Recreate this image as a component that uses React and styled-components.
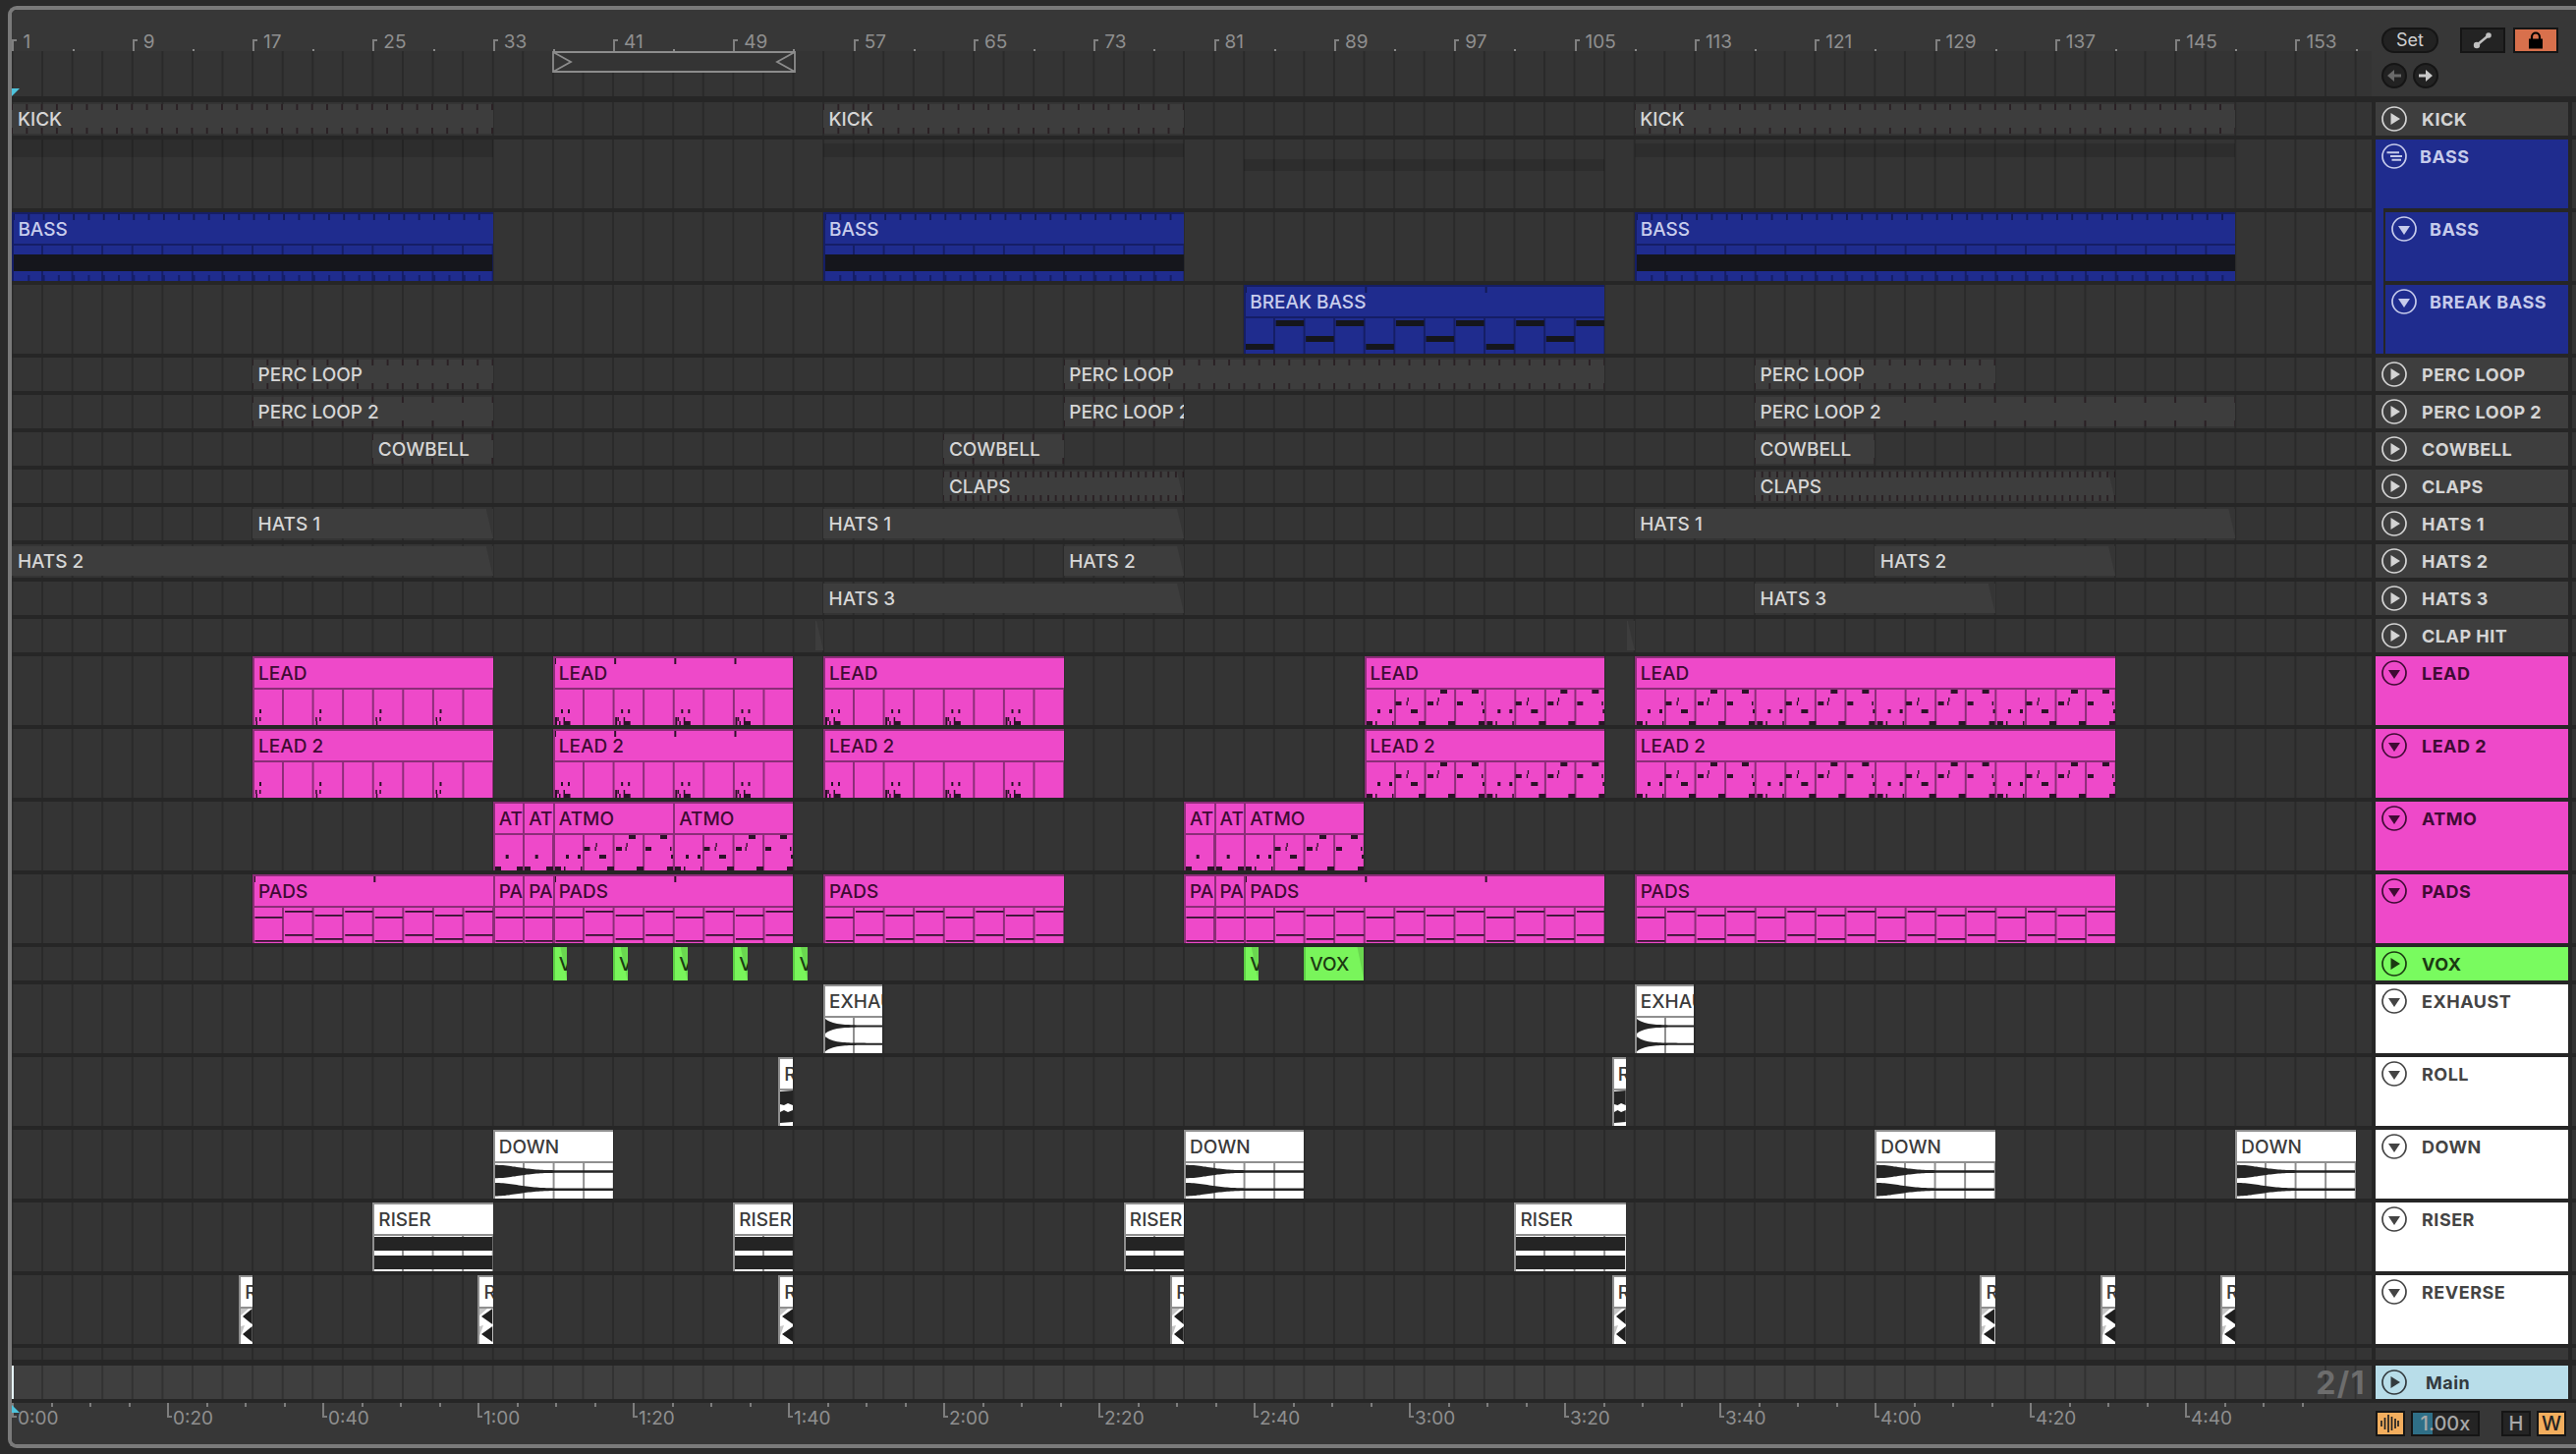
import React from 'react';
import styled, { createGlobalStyle } from 'styled-components';

const BAR = 15.29;
const CELL = BAR * 2;
const barX = (b) => 0.4 + (b - 1) * BAR;
const LANE_W = 2402;

const TONES = {
  gray: { bg: '#3d3d3d', edge: '#3d3d3d', ink: '#d6d6d6', line: '#2d2327', mark: '#2a2024', note: '#222' },
  blue: { bg: '#1f2c8e', edge: '#151e66', ink: '#c8cdec', line: '#151e66', mark: '#131a55', note: '#15161c' },
  pink: { bg: '#ee49c9', edge: '#8c2d78', ink: '#3f0b34', line: '#8c2d78', mark: '#2c1228', note: '#2c1228' },
  green: { bg: '#79f55b', edge: '#5ccf45', ink: '#1c3a12', line: '#5ccf45', mark: '#1c3a12', note: '#1c3a12' },
  white: { bg: '#ffffff', edge: '#8f8f8f', ink: '#3b3b3b', line: '#8f8f8f', mark: '#222', note: '#242424' },
};

const GlobalStyle = createGlobalStyle`
  html, body { margin: 0; padding: 0; background: #2b2b2b; }
  body { width: 2622px; height: 1480px; overflow: hidden; font-family: Inter, "Liberation Sans", sans-serif; }
`;

const Page = styled.div`
  width: 2622px;
  height: 1480px;
  padding: 6px 0 6px 8px;
  box-sizing: border-box;
  background: #2b2b2b;
`;
const Frame = styled.div`
  height: 1468px;
  box-sizing: border-box;
  border: 4px solid #7a7a7a;
  border-right: none;
  border-radius: 9px 0 0 9px;
  overflow: hidden;
  background: #262626;
  display: flex;
  flex-direction: column;
`;
const TopBar = styled.div`
  display: flex;
  height: 88px;
  flex: none;
  background: #373737;
`;
const TopLeft = styled.div`
  width: ${LANE_W}px;
  flex: none;
  display: flex;
  flex-direction: column;
`;
const Ruler = styled.div`
  position: relative;
  height: 42px;
  flex: none;
`;
const BarLabel = styled.div`
  position: absolute;
  top: 30px;
  height: 12px;
  border-left: 2px solid #808080;
  color: #8f8f8f;
  font-size: 19px;
  line-height: 1;
  &::before {
    content: '';
    position: absolute;
    left: 0;
    top: 0;
    width: 3px;
    height: 2px;
    background: #808080;
  }
  & > span { position: absolute; left: 9px; top: -7px; }
`;
const HalfTick = styled.div`
  position: absolute;
  top: 40px;
  width: 2px;
  height: 2px;
  background: #8a8a8a;
`;
const Overview = styled.div`
  position: relative;
  flex: 1;
  background-color: #343434;
  background-image: linear-gradient(90deg, #2a2a2a 2px, transparent 2px);
  background-size: ${CELL}px 100%;
  background-position: -0.5px 0;
`;
const LoopBrace = styled.svg`
  position: absolute;
  left: 550px;
  top: 0;
`;
const Playhead = styled.svg`
  position: absolute;
  left: 0;
  top: ${(p) => p.$top}px;
`;
const SetPanel = styled.div`
  flex: 1;
  box-sizing: border-box;
  padding: 18px 0 0 10px;
  display: flex;
  flex-direction: column;
  gap: 10px;
`;
const PanelRow = styled.div`
  display: flex;
  align-items: flex-start;
  gap: ${(p) => p.$gap || 6}px;
`;
const SetPill = styled.div`
  width: 58px;
  height: 26px;
  box-sizing: border-box;
  border: 2px solid #151515;
  border-radius: 13px;
  background: #222;
  color: #cfcfcf;
  font-size: 18px;
  line-height: 22px;
  text-align: center;
  margin-right: 14px;
`;
const RoundBtn = styled.div`
  width: 26px;
  height: 26px;
  box-sizing: border-box;
  border: 2px solid #151515;
  border-radius: 50%;
  background: #222;
  display: flex;
  align-items: center;
  justify-content: center;
`;
const SquareBtn = styled.div`
  width: 46px;
  height: 26px;
  box-sizing: border-box;
  border: 2px solid #151515;
  background: ${(p) => p.$bg || '#232323'};
  display: flex;
  align-items: center;
  justify-content: center;
`;
const Rows = styled.div`
  display: flex;
  flex-direction: column;
  gap: 4px;
  padding-top: 6px;
  flex: none;
`;
const Row = styled.div`
  display: flex;
  gap: 4px;
  height: ${(p) => p.$h}px;
  margin-top: ${(p) => p.$mt || 0}px;
`;
const Lane = styled.div`
  position: relative;
  width: ${LANE_W}px;
  flex: none;
  overflow: hidden;
  background-color: ${(p) => (p.$light ? '#3f3f3f' : '#343434')};
  background-image: linear-gradient(90deg, ${(p) => (p.$light ? '#323232' : '#2a2a2a')} 2px, transparent 2px);
  background-size: ${CELL}px 100%;
  background-position: -0.5px 0;
`;
const Tail = styled.div`
  flex: 1;
  background: #343434;
`;
const HeadSlot = styled.div`
  position: relative;
  width: 196px;
  flex: none;
  display: flex;
  background: ${(p) => (p.$nested ? TONES.blue.bg : 'transparent')};
  &::before {
    content: ${(p) => (p.$nested ? "''" : 'none')};
    position: absolute;
    left: 0;
    top: -4px;
    width: 8px;
    height: 4px;
    background: ${TONES.blue.bg};
  }
`;
const Head = styled.div`
  flex: 1;
  margin-left: ${(p) => (p.$nested ? 8 : 0)}px;
  border-left: ${(p) => (p.$nested ? '2px solid #262626' : 'none')};
  background: ${(p) => p.$bg};
  color: ${(p) => p.$ink};
  position: relative;
  &::before {
    content: ${(p) => (p.$nested ? "''" : 'none')};
    position: absolute;
    left: -2px;
    top: -4px;
    width: 2px;
    height: 4px;
    background: #262626;
  }
`;
const HeadLine = styled.div`
  height: 34px;
  box-sizing: border-box;
  padding-left: 6px;
  display: flex;
  align-items: center;
  gap: ${(p) => p.$gap}px;
  font-size: 18px;
  font-weight: 700;
  letter-spacing: 0.5px;
`;
const ClipBox = styled.div`
  position: absolute;
  top: ${(p) => (p.$short && p.$tone === 'gray' ? 2 : 0)}px;
  height: ${(p) => (p.$short ? (p.$tone === 'gray' ? 30 : 34) : 70)}px;
  box-sizing: border-box;
  overflow: hidden;
  background: ${(p) => TONES[p.$tone].bg};
  border-left: ${(p) => (p.$tone === 'gray' ? 'none' : `2px solid ${TONES[p.$tone].edge}`)};
  border-top: ${(p) => (p.$tone === 'gray' || p.$tone === 'green' ? 'none' : `2px solid ${TONES[p.$tone].edge}`)};
  color: ${(p) => TONES[p.$tone].ink};
  &::after {
    content: ${(p) => (p.$fade ? "''" : 'none')};
    position: absolute;
    right: 0;
    top: 0;
    bottom: 0;
    width: 7px;
    background: rgba(0, 0, 0, 0.12);
    clip-path: polygon(0 0, 100% 0, 100% 100%);
  }
`;
const ClipTitle = styled.div`
  height: ${(p) => (p.$short ? '100%' : '30px')};
  padding-left: ${(p) => (p.$tone === 'gray' ? 5.5 : 4)}px;
  display: flex;
  align-items: center;
  white-space: nowrap;
  font-size: 19px;
  font-weight: 500;
`;
const ClipBody = styled.div`
  position: relative;
  height: 36px;
  border-top: 2px solid ${(p) => TONES[p.$tone].line};
  background-color: ${(p) => TONES[p.$tone].bg};
  background-image: linear-gradient(90deg, ${(p) => TONES[p.$tone].line} 2px, transparent 2px);
  background-size: ${CELL}px 100%;
  background-position: 28px 0;
`;
const Art = styled.svg`
  position: absolute;
  left: 0;
  top: 0;
  display: block;
`;
const MarkStrip = styled.div`
  position: absolute;
  left: 0;
  right: 0;
  ${(p) => (p.$bottom ? 'bottom: 0;' : 'top: 0;')}
  height: ${(p) => p.$h}px;
  background-image: linear-gradient(90deg, transparent calc(100% - 2px), ${(p) => p.$c} calc(100% - 2px));
  background-size: ${(p) => p.$period}px 100%;
  background-position: 1px 0;
`;
const Band = styled.div`
  position: absolute;
  top: ${(p) => p.$top}px;
  height: ${(p) => p.$h}px;
  background: rgba(0, 0, 0, 0.12);
`;
const TimeSig = styled.div`
  position: absolute;
  right: 6px;
  top: 0;
  bottom: 0;
  display: flex;
  align-items: center;
  color: #6d6d6d;
  font-size: 32px;
  font-weight: 700;
  letter-spacing: 1.5px;
`;
const NowLine = styled.div`
  position: absolute;
  left: 0;
  top: 0;
  bottom: 0;
  width: 2px;
  background: #e6f6fb;
`;
const Filler = styled(Tail)`
  background: #383838;
`;
const FooterBar = styled.div`
  display: flex;
  height: 42px;
  margin-top: 4px;
  flex: none;
  background: #373737;
`;
const TimeRuler = styled.div`
  position: relative;
  width: ${LANE_W}px;
  flex: none;
`;
const TimeMajor = styled.div`
  position: absolute;
  top: 0;
  height: 15px;
  border-left: 2px solid #7d7d7d;
  color: #8f8f8f;
  font-size: 19px;
  line-height: 1;
  &::after {
    content: '';
    position: absolute;
    left: 0;
    bottom: 0;
    width: 3px;
    height: 2px;
    background: #7d7d7d;
  }
  & > span { position: absolute; left: 4px; top: 6px; }
`;
const TimeMinor = styled.div`
  position: absolute;
  top: 0;
  width: 2px;
  height: 4px;
  background: #7d7d7d;
`;
const FootControls = styled.div`
  flex: 1;
  box-sizing: border-box;
  padding: 8px 0 0 4px;
  display: flex;
  align-items: flex-start;
`;
const Chip = styled.div`
  width: ${(p) => p.$w}px;
  height: 26px;
  box-sizing: border-box;
  margin-left: ${(p) => p.$ml || 0}px;
  border: 2px solid #151515;
  background: ${(p) => p.$bg};
  color: ${(p) => p.$ink || '#a8a8a8'};
  display: flex;
  align-items: center;
  justify-content: center;
  font-size: 20px;
  font-weight: 500;
`;
const SpeedChip = styled(Chip)`
  position: relative;
  overflow: hidden;
  & > span { position: relative; }
  &::before {
    content: '';
    position: absolute;
    left: 0;
    top: 0;
    bottom: 0;
    width: 20px;
    background: #2f6f87;
  }
`;

/* ---------- clip artwork ---------- */
const NOTES = {
  A: { period: 61.16, list: [[1, 28, 1.5, 4], [1.5, 32, 1.5, 4], [5, 20, 2, 4], [5, 28, 1.5, 4]] },
  B: { period: 61.16, list: [[0, 28, 2, 8], [2.3, 28, 1.5, 4], [4, 32, 1.5, 4], [6, 20, 2, 4], [8.5, 28, 1.5, 4], [8.5, 32, 7, 4], [13, 20, 2, 4]] },
  C: {
    period: CELL * 4,
    list: [
      [0, 32, 6, 4], [9, 32, 1.5, 4], [26, 32, 1.5, 4], [11, 20, 3, 4], [23, 20, 3, 4],
      [29.5, 12, 6, 4], [41.5, 8, 1.3, 4], [40.5, 12, 1.3, 4], [45, 20, 7, 4], [53, 32, 7, 4],
      [62, 12, 6, 4], [72.5, 8, 1.3, 4], [71.5, 12, 1.3, 4], [75, 0, 7, 4], [83, 32, 7, 4],
      [92, 12, 6, 4], [107, 0, 7, 4], [117, 12, 1.5, 4], [118, 20, 2, 4], [114, 32, 6, 4],
    ],
  },
  D: { period: CELL * 2, list: [[0, 32, 6, 4], [10.7, 20, 3, 4], [22, 32, 7, 4]] },
};
const NoteArt = ({ w, kind, color }) => {
  const { period, list } = NOTES[kind];
  const rects = [];
  for (let o = 0; o < w; o += period) {
    list.forEach((n, i) => rects.push(<rect key={`${o}-${i}`} x={o + n[0]} y={n[1]} width={n[2]} height={n[3]} fill={color} />));
  }
  return <Art width={w} height={36}>{rects}</Art>;
};
const PadLines = ({ w, color }) => {
  const rows = [[9, 33], [3, 27], [7, 31], [3, 27]];
  const rects = [];
  for (let i = 0; i * CELL < w; i++) {
    rows[i % 4].forEach((y) => rects.push(<rect key={`${i}-${y}`} x={i * CELL + 0.5} y={y} width={CELL - 2.5} height={1.7} fill={color} />));
  }
  return <Art width={w} height={36}>{rects}</Art>;
};
const BassArt = ({ w }) => {
  const ticks = [];
  for (let x = BAR - 1; x < w; x += BAR) ticks.push(<rect key={x} x={x} y={30} width={2} height={6} fill={TONES.blue.line} />);
  return (
    <Art width={w} height={36}>
      <rect x={0} y={9} width={w} height={17} fill="#15161c" />
      {ticks}
    </Art>
  );
};
const BreakArt = ({ w }) => {
  const ys = [26, 2, 18, 2];
  const rects = [];
  for (let i = 0; i * CELL < w; i++) rects.push(<rect key={i} x={i * CELL} y={ys[i % 4]} width={CELL - 2} height={6} fill="#15161c" />);
  return <Art width={w} height={36}>{rects}</Art>;
};
const wave = (w, c, amp) => {
  const top = [];
  const bot = [];
  for (let x = 0; x <= w; x += 2) {
    top.push(`${x},${(c - amp(x / w)).toFixed(1)}`);
    bot.unshift(`${x},${(c + amp(x / w)).toFixed(1)}`);
  }
  return `M${top.join(' L')} L${bot.join(' L')}Z`;
};
const HornArt = ({ w, fn }) => (
  <Art width={w} height={36}>
    <path d={wave(w, 8.5, fn)} fill="#242424" />
    <path d={wave(w, 26.7, fn)} fill="#242424" />
  </Art>
);
const RiserArt = ({ w }) => (
  <Art width={w} height={36}>
    <rect x={0} y={1} width={w} height={14} fill="#242424" />
    <rect x={0} y={20} width={w} height={14} fill="#242424" />
  </Art>
);
const RollArt = ({ w }) => (
  <Art width={w} height={36}>
    <path d={`M0,1 L${w},0 L${w},15 L${w * 0.6},13 L${w * 0.3},15 L0,14Z`} fill="#242424" />
    <path d={`M0,22 L${w * 0.3},20 L${w * 0.6},22 L${w},20 L${w},32 L0,33Z`} fill="#242424" />
  </Art>
);
const ReverseArt = ({ w }) => (
  <Art width={w} height={36}>
    <path d={`M0,0 L8,0 L0,7Z M0,18 L4,17 L0,28Z`} fill="#c6c6c6" />
    <path d={`M2,8 L${w},0 L${w},16Z M2,26 L${w},18 L${w},34Z`} fill="#1f1f1f" />
  </Art>
);
const ArtFor = ({ art, w, tone }) => {
  const color = TONES[tone].note;
  if (NOTES[art]) return <NoteArt w={w} kind={art} color={color} />;
  switch (art) {
    case 'pads': return <PadLines w={w} color={color} />;
    case 'bass': return <BassArt w={w} />;
    case 'break': return <BreakArt w={w} />;
    case 'horn': return <HornArt w={w} fn={(t) => 1 + 6.5 * Math.exp(-t * 7)} />;
    case 'down': return <HornArt w={w} fn={(t) => 1.2 + 5.5 * Math.exp(-((t / 0.26) ** 2))} />;
    case 'riser': return <RiserArt w={w} />;
    case 'roll': return <RollArt w={w} />;
    case 'rev': return <ReverseArt w={w} />;
    default: return null;
  }
};

/* ---------- icons ---------- */
const TrackIcon = ({ kind }) => (
  <svg width="26" height="26" viewBox="0 0 26 26" style={{ flex: 'none' }}>
    <circle cx="13" cy="13" r="12" fill="none" stroke="currentColor" strokeWidth="1.7" />
    {kind === 'play' && <path d="M9.5 7 L19 13 L9.5 19Z" fill="currentColor" />}
    {kind === 'down' && <path d="M7 10 L19 10 L13 19Z" fill="currentColor" />}
    {kind === 'group' && (
      <path d="M5.5 9.3 H18 M9 13 H21 M10.5 16.8 H20" stroke="currentColor" strokeWidth="2" fill="none" />
    )}
  </svg>
);
const ArrowIcon = ({ dir, color }) => (
  <svg width="16" height="14" viewBox="0 0 16 14" style={{ transform: dir === 'left' ? 'scaleX(-1)' : 'none' }}>
    <path d="M1 5.5 H8 V1 L15 7 L8 13 V8.5 H1Z" fill={color} />
  </svg>
);
const StretchIcon = () => (
  <svg width="20" height="18" viewBox="0 0 20 18">
    <path d="M4 14 L16 4" stroke="#c0c0c0" strokeWidth="2.4" />
    <circle cx="4" cy="14" r="3.2" fill="#c0c0c0" />
    <circle cx="16" cy="4" r="2.8" fill="#c0c0c0" />
  </svg>
);
const LockIcon = () => (
  <svg width="16" height="18" viewBox="0 0 16 18">
    <path d="M4 8 V5.5 a4 4 0 0 1 8 0 V8" fill="none" stroke="#000" strokeWidth="2.2" />
    <rect x="1" y="7.5" width="14" height="10" fill="#000" />
  </svg>
);
const WaveIcon = () => (
  <svg width="20" height="20" viewBox="0 0 20 20">
    {[[1, 7, 13], [4.5, 4, 16], [8, 1, 19], [11.5, 3, 17], [15, 5, 15], [18, 7, 13]].map(([x, a, b]) => (
      <path key={x} d={`M${x} ${a} V${b}`} stroke="#222" strokeWidth="1.7" />
    ))}
  </svg>
);

/* ---------- data ---------- */
const c = (name, start, end, opts = {}) => ({ name, start, end, ...opts });
const HEAD = {
  gray: { bg: '#3e3e3e', ink: '#d4d4d4' },
  blue: { bg: TONES.blue.bg, ink: '#c6cbeb' },
  pink: { bg: TONES.pink.bg, ink: '#3f0b34' },
  green: { bg: '#79fb5f', ink: '#1b3a12' },
  white: { bg: '#ffffff', ink: '#444444' },
};
const k15 = { ticks: BAR };
const k30 = { ticks: CELL };
const k8 = { ticks: BAR / 2 };
const fade = { fade: true };
const TRACKS = [
  { name: 'KICK', h: 34, tone: 'gray', icon: 'play', clips: [c('KICK', 1, 33, k15), c('KICK', 55, 79, k15), c('KICK', 109, 149, k15)] },
  { name: 'BASS', h: 70, tone: 'blue', icon: 'group', gap: 13, bands: [[1, 33, 0, 18], [55, 79, 4, 14], [109, 149, 4, 14], [83, 107, 20, 12]], clips: [] },
  { name: 'BASS', h: 70, tone: 'blue', icon: 'down', nested: true, gap: 13, clips: [c('BASS', 1, 33, { art: 'bass', marks: BAR }), c('BASS', 55, 79, { art: 'bass', marks: BAR }), c('BASS', 109, 149, { art: 'bass', marks: BAR })] },
  { name: 'BREAK BASS', h: 70, tone: 'blue', icon: 'down', nested: true, gap: 13, clips: [c('BREAK BASS', 83, 107, { art: 'break', marks: CELL * 4 })] },
  { name: 'PERC LOOP', h: 34, tone: 'gray', icon: 'play', clips: [c('PERC LOOP', 17, 33, k15), c('PERC LOOP', 71, 107, k15), c('PERC LOOP', 117, 133, k15)] },
  { name: 'PERC LOOP 2', h: 34, tone: 'gray', icon: 'play', clips: [c('PERC LOOP 2', 17, 33, k30), c('PERC LOOP 2', 71, 79, k30), c('PERC LOOP 2', 117, 149, k30)] },
  { name: 'COWBELL', h: 34, tone: 'gray', icon: 'play', clips: [c('COWBELL', 25, 33, k30), c('COWBELL', 63, 71, k30), c('COWBELL', 117, 125, k30)] },
  { name: 'CLAPS', h: 34, tone: 'gray', icon: 'play', clips: [c('CLAPS', 63, 79, { ...k8, ...fade }), c('CLAPS', 117, 141, { ...k8, ...fade })] },
  { name: 'HATS 1', h: 34, tone: 'gray', icon: 'play', clips: [c('HATS 1', 17, 33, fade), c('HATS 1', 55, 79, fade), c('HATS 1', 109, 149, fade)] },
  { name: 'HATS 2', h: 34, tone: 'gray', icon: 'play', clips: [c('HATS 2', 1, 33, fade), c('HATS 2', 71, 79, fade), c('HATS 2', 125, 141, fade)] },
  { name: 'HATS 3', h: 34, tone: 'gray', icon: 'play', clips: [c('HATS 3', 55, 79, fade), c('HATS 3', 117, 133, fade)] },
  { name: 'CLAP HIT', h: 34, tone: 'gray', icon: 'play', clips: [c('', 54.5, 55, fade), c('', 108.5, 109, fade)] },
  { name: 'LEAD', h: 70, tone: 'pink', icon: 'down', clips: [
    c('LEAD', 17, 33, { art: 'A' }), c('LEAD', 37, 53, { art: 'B', marks: CELL * 2 }), c('LEAD', 55, 71, { art: 'B' }),
    c('LEAD', 91, 107, { art: 'C' }), c('LEAD', 109, 141, { art: 'C' })] },
  { name: 'LEAD 2', h: 70, tone: 'pink', icon: 'down', clips: [
    c('LEAD 2', 17, 33, { art: 'A' }), c('LEAD 2', 37, 53, { art: 'B', marks: CELL * 2 }), c('LEAD 2', 55, 71, { art: 'B' }),
    c('LEAD 2', 91, 107, { art: 'C' }), c('LEAD 2', 109, 141, { art: 'C' })] },
  { name: 'ATMO', h: 70, tone: 'pink', icon: 'down', clips: [
    c('ATMO', 33, 35, { art: 'D' }), c('ATMO', 35, 37, { art: 'D' }), c('ATMO', 37, 45, { art: 'C' }), c('ATMO', 45, 53, { art: 'C' }),
    c('ATMO', 79, 81, { art: 'D' }), c('ATMO', 81, 83, { art: 'D' }), c('ATMO', 83, 91, { art: 'C' })] },
  { name: 'PADS', h: 70, tone: 'pink', icon: 'down', clips: [
    c('PADS', 17, 33, { art: 'pads', marks: CELL * 4 }), c('PADS', 33, 35, { art: 'pads' }), c('PADS', 35, 37, { art: 'pads' }),
    c('PADS', 37, 53, { art: 'pads', marks: CELL * 4 }), c('PADS', 55, 71, { art: 'pads' }), c('PADS', 79, 81, { art: 'pads' }),
    c('PADS', 81, 83, { art: 'pads' }), c('PADS', 83, 107, { art: 'pads', marks: CELL * 4 }), c('PADS', 109, 141, { art: 'pads' })] },
  { name: 'VOX', h: 34, tone: 'green', icon: 'play', clips: [
    ...[37, 41, 45, 49, 53, 83].map((b) => c('VOX', b, b + 0.95, fade)), c('VOX', 87, 91, fade)] },
  { name: 'EXHAUST', h: 70, tone: 'white', icon: 'down', clips: [c('EXHAUST', 55, 58.95, { art: 'horn' }), c('EXHAUST', 109, 112.95, { art: 'horn' })] },
  { name: 'ROLL', h: 70, tone: 'white', icon: 'down', clips: [c('ROLL', 52, 53, { art: 'roll' }), c('ROLL', 107.5, 108.4, { art: 'roll' })] },
  { name: 'DOWN', h: 70, tone: 'white', icon: 'down', clips: [
    c('DOWN', 33, 41, { art: 'down' }), c('DOWN', 79, 87, { art: 'down' }), c('DOWN', 125, 133, { art: 'down' }), c('DOWN', 149, 157, { art: 'down' })] },
  { name: 'RISER', h: 70, tone: 'white', icon: 'down', clips: [
    c('RISER', 25, 33, { art: 'riser' }), c('RISER', 49, 53, { art: 'riser' }), c('RISER', 75, 79, { art: 'riser' }), c('RISER', 101, 108.4, { art: 'riser' })] },
  { name: 'REVERSE', h: 70, tone: 'white', icon: 'down', clips: [
    c('REVERSE', 16.1, 17, { art: 'rev' }), c('REVERSE', 32, 33, { art: 'rev' }), c('REVERSE', 52, 53, { art: 'rev' }), c('REVERSE', 78.1, 79, { art: 'rev' }),
    c('REVERSE', 107.5, 108.4, { art: 'rev' }), c('REVERSE', 132, 133, { art: 'rev' }), c('REVERSE', 140, 141, { art: 'rev' }), c('REVERSE', 148, 149, { art: 'rev' })] },
];

const BAR_LABELS = Array.from({ length: 20 }, (_, i) => 1 + i * 8);
const TIME_LABELS = ['0:00', '0:20', '0:40', '1:00', '1:20', '1:40', '2:00', '2:20', '2:40', '3:00', '3:20', '3:40', '4:00', '4:20', '4:40'];

const Clip = ({ clip, tone, short }) => {
  const left = barX(clip.start);
  const width = barX(clip.end) - left;
  const bodyW = width - 2;
  return (
    <ClipBox $tone={tone} $short={short} $fade={clip.fade} style={{ left, width }}>
      {clip.ticks && <MarkStrip $h={6} $period={clip.ticks} $c={TONES[tone].mark} />}
      {clip.ticks && <MarkStrip $bottom $h={6} $period={clip.ticks} $c={TONES[tone].mark} />}
      {clip.marks && <MarkStrip $h={6} $period={clip.marks} $c={TONES[tone].mark} />}
      {clip.name && <ClipTitle $short={short} $tone={tone}>{clip.name}</ClipTitle>}
      {!short && (
        <ClipBody $tone={tone}>
          <ArtFor art={clip.art} w={bodyW} tone={tone} />
        </ClipBody>
      )}
    </ClipBox>
  );
};

const TrackHeader = ({ track }) => {
  const h = HEAD[track.tone];
  return (
    <HeadSlot $nested={track.nested}>
      <Head $nested={track.nested} $bg={h.bg} $ink={h.ink}>
        <HeadLine $gap={track.gap || 15}>
          <TrackIcon kind={track.icon} />
          {track.name}
        </HeadLine>
      </Head>
    </HeadSlot>
  );
};

export default function App() {
  const halfBars = BAR_LABELS.map((b) => b + 4);
  const minors = [];
  for (let i = 0; i < 60; i++) {
    if (i % 4 !== 0) minors.push(i);
  }
  return (
    <Page>
      <GlobalStyle />
      <Frame>
        <TopBar>
          <TopLeft>
            <Ruler>
              {BAR_LABELS.map((b) => (
                <BarLabel key={b} style={{ left: barX(b) }}><span>{b}</span></BarLabel>
              ))}
              {halfBars.map((b) => (
                <HalfTick key={b} style={{ left: barX(b) }} />
              ))}
            </Ruler>
            <Overview>
              <LoopBrace width="250" height="22" viewBox="0 0 250 22">
                <path d="M1 1 H247 V21 H1Z M1 1 L19 11 L1 21 M247 1 L229 11 L247 21" fill="#343434" stroke="#8c8c8c" strokeWidth="1.8" />
              </LoopBrace>
              <Playhead $top={38} width="8" height="8" viewBox="0 0 8 8">
                <path d="M0 0 H8 L0 8Z" fill="#4ec3dc" />
              </Playhead>
            </Overview>
          </TopLeft>
          <SetPanel>
            <PanelRow $gap={8}>
              <SetPill>Set</SetPill>
              <SquareBtn><StretchIcon /></SquareBtn>
              <SquareBtn $bg="#d8704c"><LockIcon /></SquareBtn>
            </PanelRow>
            <PanelRow>
              <RoundBtn><ArrowIcon dir="left" color="#6a6a6a" /></RoundBtn>
              <RoundBtn><ArrowIcon dir="right" color="#c8c8c8" /></RoundBtn>
            </PanelRow>
          </SetPanel>
        </TopBar>
        <Rows>
          {TRACKS.map((t, i) => {
            const short = t.h === 34;
            return (
              <Row key={i} $h={t.h}>
                <Lane>
                  {(t.bands || []).map(([s, e, top, h]) => (
                    <Band key={s} $top={top} $h={h} style={{ left: barX(s), width: barX(e) - barX(s) }} />
                  ))}
                  {t.clips.map((cl, j) => (
                    <Clip key={j} clip={cl} tone={t.tone} short={short} />
                  ))}
                </Lane>
                <TrackHeader track={t} />
                <Tail />
              </Row>
            );
          })}
          <Row $h={12}>
            <Lane />
            <HeadSlot><Filler /></HeadSlot>
            <Tail />
          </Row>
          <Row $h={34} $mt={2}>
            <Lane $light>
              <NowLine />
              <TimeSig>2/1</TimeSig>
            </Lane>
            <HeadSlot>
              <Head $bg="#b8dde9" $ink="#333a3e">
                <HeadLine $gap={19}>
                  <TrackIcon kind="play" />
                  Main
                </HeadLine>
              </Head>
            </HeadSlot>
            <Tail />
          </Row>
        </Rows>
        <FooterBar>
          <TimeRuler>
            {TIME_LABELS.map((t, i) => (
              <TimeMajor key={t} style={{ left: i * 158 }}><span>{t}</span></TimeMajor>
            ))}
            {minors.map((i) => (
              <TimeMinor key={i} style={{ left: i * 39.5 }} />
            ))}
            <Playhead $top={2} width="8" height="8" viewBox="0 0 8 8">
              <path d="M0 0 L8 8 H0Z" fill="#4ec3dc" />
            </Playhead>
          </TimeRuler>
          <FootControls>
            <Chip $w={30} $bg="#f3ae5e"><WaveIcon /></Chip>
            <SpeedChip $w={70} $ml={6} $bg="#242424"><span>1.00x</span></SpeedChip>
            <Chip $w={30} $ml={22} $bg="#242424">H</Chip>
            <Chip $w={30} $ml={6} $bg="#f3ae5e" $ink="#222">W</Chip>
          </FootControls>
        </FooterBar>
      </Frame>
    </Page>
  );
}
